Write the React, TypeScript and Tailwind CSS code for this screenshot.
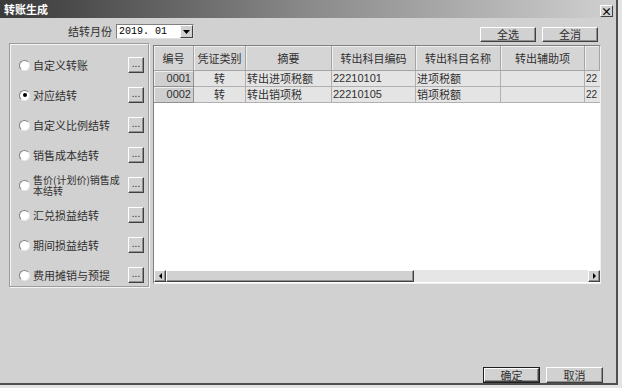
import React from 'react';

const font = { fontFamily: '"Noto Sans CJK SC", "Liberation Sans", sans-serif' };

const options = [
  { label: '自定义转账', checked: false },
  { label: '对应结转', checked: true },
  { label: '自定义比例结转', checked: false },
  { label: '销售成本结转', checked: false },
  { label: '售价(计划价)销售成本结转', checked: false, wrap: true },
  { label: '汇兑损益结转', checked: false },
  { label: '期间损益结转', checked: false },
  { label: '费用摊销与预提', checked: false },
];

const rows = [
  { no: '0001', type: '转', memo: '转出进项税额', code: '22210101', name: '进项税额' },
  { no: '0002', type: '转', memo: '转出销项税', code: '22210105', name: '销项税额' },
];

const cols = 'grid grid-cols-[40px_52px_86px_84px_85px_84px_15px]';

function Btn({ children, className = '', isDefault = false }: { children: React.ReactNode; className?: string; isDefault?: boolean }) {
  return (
    <div className={`${isDefault ? 'border border-[#202020]' : ''} ${className}`}>
      <div className="h-full w-full flex items-center justify-center bg-[#d2d1d1] border-t border-l border-t-white border-l-white border-b border-r border-b-[#404040] border-r-[#404040] shadow-[inset_-1px_-1px_0_#909090] text-[11px] leading-none text-[#303030]">
        {children}
      </div>
    </div>
  );
}

function Radio({ checked }: { checked: boolean }) {
  return (
    <div className="w-[11px] h-[11px] rounded-full bg-white border border-t-[#808080] border-l-[#808080] border-b-[#e8e8e8] border-r-[#e8e8e8] flex items-center justify-center shrink-0">
      {checked && <div className="w-[4px] h-[4px] rounded-full bg-black" />}
    </div>
  );
}

export default function App() {
  return (
    <div className="w-[622px] h-[388px] bg-[#e4e4e4] overflow-hidden" style={font}>
      <div className="w-[618px] h-[385px] bg-[#d2d1d1] border-r-2 border-b-2 border-r-[#505050] border-b-[#505050] flex flex-col">
        {/* title bar */}
        <div className="h-[18px] flex items-center justify-between pl-[4px] pr-[3px] bg-gradient-to-r from-[#3a3a3a] via-[#8a8a8a] to-[#d0d0d0]">
          <span className="text-white text-[11px] font-bold leading-none">转账生成</span>
          <div className="w-[13px] h-[12px] mt-[4px] bg-[#d2d1d1] border border-t-white border-l-white border-b-[#404040] border-r-[#404040] flex items-center justify-center text-[11px] font-bold leading-none">×</div>
        </div>

        {/* top row */}
        <div className="flex items-start h-[24px] pl-[68px] pr-[18px]">
          <span className="text-[11px] text-[#303030] leading-none mt-[8px]">结转月份</span>
          <div className="ml-[4px] mt-[6px] w-[78px] h-[15px] bg-white border border-t-[#808080] border-l-[#808080] border-b-[#e0e0e0] border-r-[#e0e0e0] flex items-center">
            <span className="flex-1 pl-[2px] text-[10px] leading-none" style={{ fontFamily: '"Liberation Mono", monospace' }}>2019. 01</span>
            <div className="w-[13px] h-[13px] bg-[#d2d1d1] border border-t-white border-l-white border-b-[#404040] border-r-[#404040] flex items-center justify-center">
              <svg width="7" height="4" viewBox="0 0 7 4"><path d="M0 0h7L3.5 4z" fill="#000" /></svg>
            </div>
          </div>
          <div className="ml-auto mt-[9px] flex gap-[6px]">
            <Btn className="w-[56px] h-[15px]">全选</Btn>
            <Btn className="w-[56px] h-[15px]">全消</Btn>
          </div>
        </div>

        {/* main */}
        <div className="flex items-start pl-[9px]">
          <div className="w-[140px] h-[244px] mt-[1px] border border-[#9c9c9c] shadow-[inset_1px_1px_0_#f4f4f4,1px_1px_0_#f4f4f4] flex flex-col pt-[6px] pl-[9px] pr-[4px]">
            {options.map((o) => (
              <div key={o.label} className="h-[30px] shrink-0 flex items-center">
                <div className="flex items-center flex-1">
                  <Radio checked={o.checked} />
                  <span className={`ml-[3px] text-[#303030] ${o.wrap ? 'text-[10px] leading-[11px] w-[90px]' : 'text-[11px] leading-none'}`}>{o.label}</span>
                </div>
                <Btn className="w-[16px] h-[16px] ml-[2px]">
                  <span className="text-[10px] leading-none -mt-[4px]">...</span>
                </Btn>
              </div>
            ))}
          </div>

          <div className="ml-[4px] mt-[3px] w-[448px] h-[239px] bg-white border border-t-[#808080] border-l-[#808080] border-b-[#f0f0f0] border-r-[#f0f0f0] flex flex-col overflow-hidden">
            <div className={`${cols} h-[25px] bg-[#d6d5d5]`}>
              {['编号', '凭证类别', '摘要', '转出科目编码', '转出科目名称', '转出辅助项', ''].map((h, i) => (
                <div key={i} className="flex items-center justify-center border-r border-b border-r-[#a4a4a4] border-b-[#a4a4a4] shadow-[inset_1px_1px_0_#f0f0f0] text-[11px] text-[#303030] leading-none">
                  {h}
                </div>
              ))}
            </div>
            {rows.map((r) => (
              <div key={r.no} className={`${cols} h-[16px] text-[11px] leading-none text-[#303030]`}>
                <div className="bg-[#d0cfcf] border-r border-b border-r-[#909090] border-b-[#909090] shadow-[inset_1px_1px_0_#f0f0f0] flex items-center justify-end pr-[2px]" style={{ fontFamily: '"Liberation Sans", sans-serif' }}>{r.no}</div>
                <div className="bg-[#e4e4e4] border-r border-b border-[#b0b0b0] flex items-center justify-center">{r.type}</div>
                <div className="bg-[#e4e4e4] border-r border-b border-[#b0b0b0] flex items-center pl-[1px]">{r.memo}</div>
                <div className="bg-[#e4e4e4] border-r border-b border-[#b0b0b0] flex items-center pl-[1px]" style={{ fontFamily: '"Liberation Sans", sans-serif' }}>{r.code}</div>
                <div className="bg-[#e4e4e4] border-r border-b border-[#b0b0b0] flex items-center pl-[1px]">{r.name}</div>
                <div className="bg-[#e4e4e4] border-r border-b border-[#b0b0b0]" />
                <div className="bg-[#e4e4e4] border-b border-[#b0b0b0] flex items-center pl-[1px] overflow-hidden whitespace-nowrap text-[10px]" style={{ fontFamily: '"Liberation Sans", sans-serif' }}>22</div>
              </div>
            ))}
            <div className="flex-1" />
            <div className="h-[12px] flex bg-[#e6e6e6] mb-[1px]">
              <Btn className="w-[12px] h-[12px]">
                <svg width="3" height="6" viewBox="0 0 3 6"><path d="M3 0v6L0 3z" fill="#000" /></svg>
              </Btn>
              <Btn className="w-[248px] h-[12px]">{''}</Btn>
              <div className="flex-1" />
              <Btn className="w-[12px] h-[12px]">
                <svg width="3" height="6" viewBox="0 0 3 6"><path d="M0 0v6l3-3z" fill="#000" /></svg>
              </Btn>
            </div>
          </div>
        </div>

        {/* bottom buttons */}
        <div className="flex justify-end gap-[6px] pr-[13px] mt-[80px]">
          <Btn isDefault className="w-[57px] h-[16px]">确定</Btn>
          <Btn className="w-[57px] h-[16px]">取消</Btn>
        </div>
      </div>
    </div>
  );
}
